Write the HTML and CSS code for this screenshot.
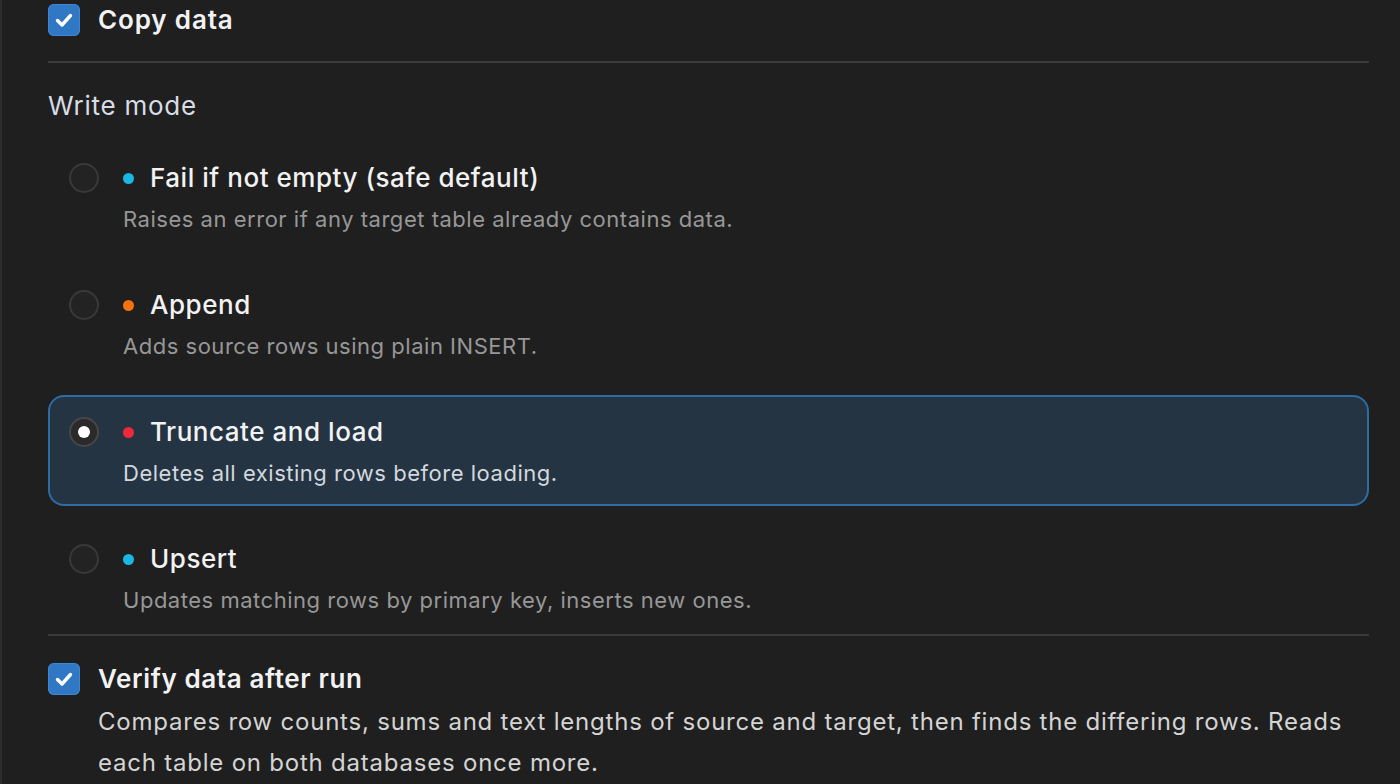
FILE: index.html
```html
<!DOCTYPE html>
<html lang="en">
<head>
<meta charset="utf-8">
<title>Write mode</title>
<link rel="stylesheet" href="styles.css">
</head>
<body>
<div class="panel">
  <label class="check-row">
    <span class="checkbox"><svg viewBox="0 0 32 32" width="32" height="32"><path d="M9.5 16.5 L14 21 L22.5 11.5" fill="none" stroke="#fff" stroke-width="3.4" stroke-linecap="round" stroke-linejoin="round"/></svg></span>
    <span class="check-title copy">Copy data</span>
  </label>
  <div class="divider first"></div>
  <div class="section-label">Write mode</div>
  <div class="options">
    <div class="option">
      <span class="radio"></span>
      <div class="opt-body">
        <div class="opt-title"><span class="dot cyan"></span>Fail if not empty (safe default)</div>
        <div class="opt-desc">Raises an error if any target table already contains data.</div>
      </div>
    </div>
    <div class="option">
      <span class="radio"></span>
      <div class="opt-body">
        <div class="opt-title"><span class="dot orange"></span>Append</div>
        <div class="opt-desc">Adds source rows using plain INSERT.</div>
      </div>
    </div>
    <div class="option selected">
      <span class="radio on"></span>
      <div class="opt-body">
        <div class="opt-title"><span class="dot red"></span>Truncate and load</div>
        <div class="opt-desc">Deletes all existing rows before loading.</div>
      </div>
    </div>
    <div class="option">
      <span class="radio"></span>
      <div class="opt-body">
        <div class="opt-title"><span class="dot cyan"></span>Upsert</div>
        <div class="opt-desc">Updates matching rows by primary key, inserts new ones.</div>
      </div>
    </div>
  </div>
  <div class="divider second"></div>
  <div class="verify">
    <span class="checkbox"><svg viewBox="0 0 32 32" width="32" height="32"><path d="M9.5 16.5 L14 21 L22.5 11.5" fill="none" stroke="#fff" stroke-width="3.4" stroke-linecap="round" stroke-linejoin="round"/></svg></span>
    <div class="verify-body">
      <div class="check-title">Verify data after run</div>
      <div class="verify-desc">Compares row counts, sums and text lengths of source and target, then finds the differing rows. Reads each table on both databases once more.</div>
    </div>
  </div>
</div>
</body>
</html>
```
FILE: styles.css
```css
* { box-sizing: border-box; }
html, body {
  margin: 0;
  padding: 0;
  background: #1f1f1f;
  height: 784px;
  overflow: hidden;
}
body {
  font-family: "Inter", "Noto Sans", sans-serif;
  color: #f0f0f0;
}
.panel {
  border-left: 2px solid #2d2d2d;
  height: 784px;
  padding: 4px 31px 0 46px;
}
.check-row {
  display: flex;
  align-items: center;
  gap: 18px;
  height: 32px;
}
.checkbox {
  width: 32px;
  height: 32px;
  flex: 0 0 32px;
  border-radius: 6px;
  background: #3077c4;
  box-shadow: inset 0 0 0 1px #3d86d4;
  display: block;
}
.checkbox svg { display: block; }
.check-title {
  font-size: 26px;
  font-weight: 600;
  line-height: 36px;
  letter-spacing: 0.62px;
  color: #f2f2f2;
}
.check-title.copy { letter-spacing: 0.85px; }
.divider {
  height: 2px;
  background: #3a3a3a;
}
.divider.first { margin-top: 25px; }
.divider.second { margin-top: 1px; }
.section-label {
  margin-top: 25px;
  font-size: 26px;
  line-height: 36px;
  letter-spacing: 0.75px;
  color: #d8dce4;
  font-weight: 400;
}
.options {
  margin-top: 17px;
  display: flex;
  flex-direction: column;
  gap: 16px;
}
.option {
  display: grid;
  grid-template-columns: 30px 1fr;
  column-gap: 24px;
  padding: 17px 19px 15px 19px;
  border: 2px solid transparent;
  border-radius: 16px;
}
.option.selected {
  background: #243443;
  border-color: #2f6ca3;
}
.radio {
  width: 30px;
  height: 30px;
  margin-top: 3px;
  border-radius: 50%;
  border: 2px solid #393939;
  background: #232323;
  display: flex;
  align-items: center;
  justify-content: center;
}
.radio.on {
  background: #2a2a2a;
  border: 2px solid #474747;
}
.radio.on::after {
  content: "";
  width: 12px;
  height: 12px;
  border-radius: 50%;
  background: #ffffff;
}
.opt-title {
  display: flex;
  align-items: center;
  gap: 16px;
  font-size: 26px;
  font-weight: 500;
  line-height: 36px;
  letter-spacing: 0.54px;
  color: #f2f2f2;
}
.dot {
  width: 11px;
  height: 11px;
  border-radius: 50%;
  flex: 0 0 11px;
}
.dot.cyan { background: #1ab7e2; }
.dot.orange { background: #f4720f; }
.dot.red { background: #f0283a; }
.opt-desc {
  margin-top: 7px;
  font-size: 22px;
  line-height: 32px;
  letter-spacing: 0.52px;
  color: #979797;
}
.option.selected .opt-desc { color: #d3d8de; }
.verify {
  margin-top: 27px;
  display: grid;
  grid-template-columns: 32px 1fr;
  column-gap: 18px;
}
.verify-body .check-title { margin-top: -2px; }
.verify-desc {
  margin-top: 4px;
  font-size: 24px;
  line-height: 41px;
  letter-spacing: 0.78px;
  color: #d4d4d4;
}
```
